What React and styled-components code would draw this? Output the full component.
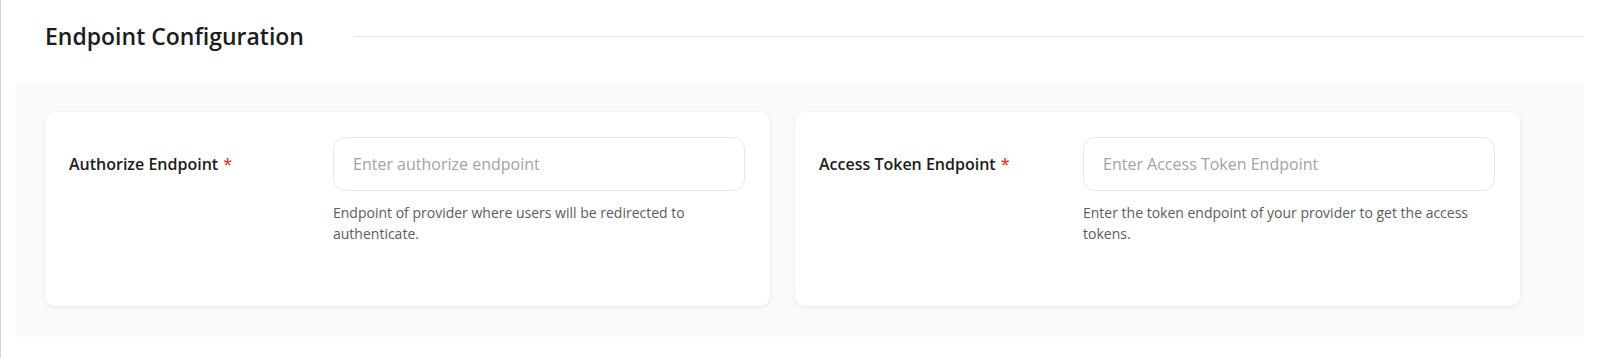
import React from 'react';
import styled, {createGlobalStyle} from 'styled-components';

const GlobalStyle = createGlobalStyle`
    html, body {
        margin: 0;
        padding: 0;
        background: #ffffff;
    }
    body {
        font-family: "Open Sans", "Noto Sans", sans-serif;
        color: #1f1f1f;
    }
`;

const fields = [
    {
        label       : 'Authorize Endpoint',
        placeholder : 'Enter authorize endpoint',
        help        : 'Endpoint of provider where users will be redirected to authenticate.'
    },
    {
        label       : 'Access Token Endpoint',
        placeholder : 'Enter Access Token Endpoint',
        help        : 'Enter the token endpoint of your provider to get the access tokens.'
    }
];

export default function App() {
    return (
        <Page>
            <GlobalStyle />
            <Section>
                <Header>
                    <Title>Endpoint Configuration</Title>
                    <Divider />
                </Header>
                <Panel>
                    {fields.map(f => (
                        <Card key={f.label}>
                            <Label>
                                {f.label}<Required>*</Required>
                            </Label>
                            <Field>
                                <Input placeholder={f.placeholder} />
                                <Help>{f.help}</Help>
                            </Field>
                        </Card>
                    ))}
                </Panel>
            </Section>
        </Page>
    );
}

const Page = styled.div`
    min-height: 358px;
    border-left: 1px solid #d4d4d4;
    box-sizing: border-box;
    padding: 0 17px 0 14px;
`;

const Section = styled.div`
    display: flex;
    flex-direction: column;
`;

const Header = styled.div`
    display: flex;
    align-items: center;
    height: 72px;
    padding-left: 30px;
    box-sizing: border-box;
`;

const Title = styled.h2`
    margin: 0;
    font-size: 23px;
    font-weight: 600;
    color: #1c1c1c;
    white-space: nowrap;
`;

const Divider = styled.div`
    flex: 1;
    height: 1px;
    background: #e6e6e6;
    margin-left: 50px;
`;

const Panel = styled.div`
    display: flex;
    gap: 25px;
    margin-top: 11px;
    padding: 29px 30px 31px;
    background: #fafafa;
    border-radius: 4px;
`;

const Card = styled.div`
    width: 725px;
    height: 194px;
    box-sizing: border-box;
    display: flex;
    padding: 25px 25px 0 24px;
    background: #ffffff;
    border-radius: 10px;
    box-shadow: 0 1px 4px rgba(0, 0, 0, 0.08);
`;

const Label = styled.div`
    width: 264px;
    flex-shrink: 0;
    height: 54px;
    display: flex;
    align-items: center;
    font-size: 16px;
    font-weight: 600;
    color: #1c1c1c;
    white-space: pre;
`;

const Required = styled.span`
    color: #e53935;
    margin-left: 5px;
`;

const Field = styled.div`
    flex: 1;
    display: flex;
    flex-direction: column;
`;

const Input = styled.input`
    height: 54px;
    box-sizing: border-box;
    border: 1px solid #e8e8e8;
    border-radius: 12px;
    padding: 0 19px;
    font-family: inherit;
    font-size: 16px;
    color: #1c1c1c;
    background: #fff;
    outline: none;

    &::placeholder {
        color: #a3a3a3;
    }
`;

const Help = styled.div`
    margin-top: 11px;
    font-size: 14px;
    line-height: 21px;
    color: #5c5c5c;
    padding-right: 12px;
`;
